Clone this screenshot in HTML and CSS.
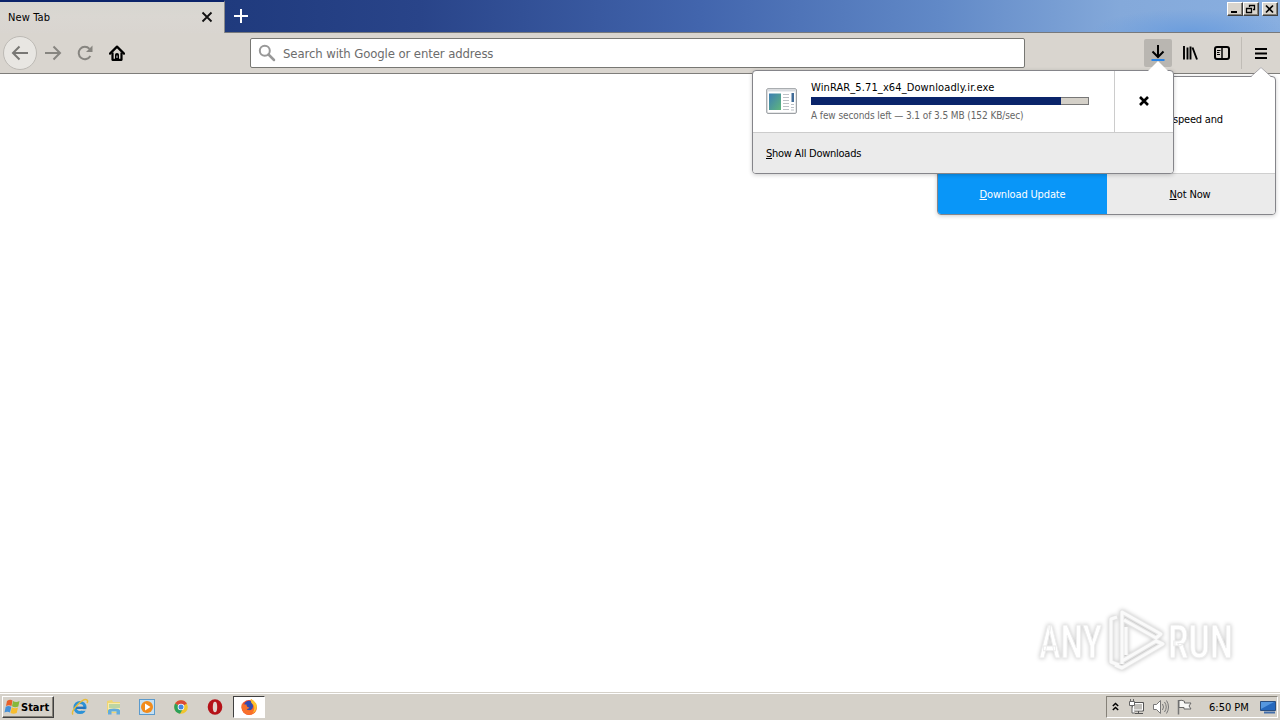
FILE: index.html
```html
<!DOCTYPE html>
<html lang="en">
<head>
<meta charset="utf-8">
<title>New Tab</title>
<link rel="stylesheet" href="styles.css">
</head>
<body>
<div class="screen">
  <header class="titlebar">
    <div class="tab"><span class="t-tab">New Tab</span>
      <svg class="tab-close" width="12" height="12" viewBox="0 0 12 12"><path d="M1.500 1.500l9 9M10.500 1.500l-9 9" stroke="#111" stroke-width="1.800"/></svg>
    </div>
    <svg class="plus" width="14" height="14" viewBox="0 0 14 14"><path d="M7 0v14M0 7h14" stroke="#fff" stroke-width="2"/></svg>
    <div class="winbtns">
      <div class="wb"><svg width="12" height="10"><path d="M2 8h6" stroke="#000" stroke-width="2"/></svg></div>
      <div class="wb"><svg width="12" height="10"><path d="M4.500 3V1.500H9.500V5.500H8M4 1.500h6M1.500 4.500h5v4h-5zM1 4.500h6" fill="none" stroke="#000" stroke-width="1.300"/></svg></div>
      <div class="wb gap"><svg width="12" height="10"><path d="M2 1.500l7 7M9 1.500l-7 7" stroke="#000" stroke-width="1.700"/></svg></div>
    </div>
  </header>
  <nav class="toolbar">
    <div class="back"><svg width="18" height="16" viewBox="0 0 18 16"><path d="M17 8H2M8.500 1.500L2 8l6.500 6.500" fill="none" stroke="#787774" stroke-width="2"/></svg></div>
    <svg class="fwd" width="18" height="16" viewBox="0 0 18 16"><path d="M1 8h15M9.500 1.500L16 8l-6.500 6.500" fill="none" stroke="#878580" stroke-width="2"/></svg>
    <svg class="reload" width="16" height="16" viewBox="0 0 16 16"><path d="M13.300 11A6.200 6.200 0 1 1 12.500 3.800" fill="none" stroke="#878580" stroke-width="2"/><path d="M15.500 0.500v6.500H9z" fill="#878580"/></svg>
    <svg class="home" width="16" height="16" viewBox="0 0 16 16"><path d="M1 8.600L8 1.600l7 7" fill="none" stroke="#000" stroke-width="2.200" stroke-linejoin="round" stroke-linecap="round"/><path d="M3.500 7.500V14.800h9V7.500" fill="none" stroke="#000" stroke-width="2.200" stroke-linejoin="round"/><path d="M6 15V9.500q0-1.500 2-1.500t2 1.500V15z"/><path d="M8 10.500v2.500" stroke="#ddd" stroke-width="1"/></svg>
    <div class="urlbar">
      <svg width="18" height="18" viewBox="0 0 18 18"><circle cx="6.800" cy="6.800" r="5" fill="none" stroke="#989898" stroke-width="2"/><path d="M10.500 10.500L16 16" stroke="#989898" stroke-width="2.500" stroke-linecap="round"/></svg>
      <span class="t-url">Search with Google or enter address</span>
    </div>
    <div class="tools">
      <div class="dl"><svg width="16" height="18" viewBox="0 0 16 18"><path d="M8 1v12M2.500 7.500L8 13l5.500-5.500" fill="none" stroke="#000" stroke-width="2"/><path d="M1.500 16h13" stroke="#2a84e6" stroke-width="2"/></svg></div>
      <svg class="lib" width="16" height="16" viewBox="0 0 16 16"><path d="M2 1v13.500M5.500 2.500v12M8.500 1.500v13M10.500 2.500l4.500 12" stroke="#000" stroke-width="1.900"/></svg>
      <svg class="side" width="16" height="14" viewBox="0 0 16 14"><rect x="1" y="1" width="14" height="12" rx="2" fill="none" stroke="#000" stroke-width="2"/><path d="M8 1v12" stroke="#000" stroke-width="1.500"/><path d="M3 4.500h3.500M3 6.500h2.500M3 8.500h3" stroke="#000"/></svg>
      <div class="sep"></div>
      <svg class="burger" width="12" height="13" viewBox="0 0 12 13"><path d="M0 2h12M0 6.500h12M0 11h12" stroke="#000" stroke-width="2"/></svg>
    </div>
  </nav>
  <main class="page"></main>
  <footer class="taskbar">
    <div class="start">
      <svg width="17" height="16" viewBox="0 0 17 16"><path d="M3 2q3-2 5.500-.5L7.500 7Q5 5.500 2 7z" fill="#e8602a"/><path d="M9 2Q12 4 15.500 2L14.300 7.500Q11 9 8 7.300z" fill="#86b83b"/><path d="M1.700 7.700Q4.500 6.200 7.300 7.700L6 13.500Q3.500 12 .5 13.500z" fill="#4590d8"/><path d="M7.800 8.200q3 1.800 6.200 .2L12.700 14Q9.500 15.500 6.500 14z" fill="#f7bd2f"/></svg>
      <span class="t-start">Start</span>
    </div>
    <div class="quick">
      <svg width="18" height="18" viewBox="0 0 18 18"><circle cx="9" cy="9.500" r="5" fill="none" stroke="#2c92d7" stroke-width="3.200"/><path d="M5 9.800h9.500" stroke="#2474bd" stroke-width="2.400"/><path d="M11 12h5" stroke="#d5d1c9" stroke-width="1.600"/><path d="M2 16.500C-1 13 12-.5 16 2c1 .8.500 2.200 0 3" fill="none" stroke="#e8bc38" stroke-width="1.500"/></svg>
      <svg width="18" height="18" viewBox="0 0 18 18"><path d="M2 3l5-1 1 2h7v11H2z" fill="#efd574"/><path d="M3 5h12v9H3z" fill="#f9ecaa"/><path d="M4 9h11M4 7h11" stroke="#80bd9a"/><path d="M3 16.500v-4q0-2 6-2t6 2v4h-3.500v-3h-5v3z" fill="#62acdc"/></svg>
      <svg width="18" height="18" viewBox="0 0 18 18"><rect x="1.500" y="1.500" width="15" height="15" fill="#c5e0f3" stroke="#5b9acc"/><circle cx="9" cy="9" r="6" fill="#f28b1b"/><path d="M7 5.500l5.500 3.500L7 12.500z" fill="#fff"/></svg>
      <svg width="18" height="18" viewBox="0 0 18 18"><circle cx="9" cy="9" r="6.800" fill="#f0c52e"/><path d="M9 9L3.100 5.600A6.800 6.800 0 0 1 14.900 5.600z" fill="#da4a38"/><path d="M9 9L3.100 5.600A6.800 6.800 0 0 0 8 15.700l3-5z" fill="#2ca05a"/><circle cx="9" cy="9" r="3.300" fill="#fff"/><circle cx="9" cy="9" r="2.500" fill="#4687e0"/></svg>
      <svg width="18" height="18" viewBox="0 0 18 18"><ellipse cx="9" cy="9" rx="7.300" ry="7.700" fill="#b51218"/><ellipse cx="9" cy="9" rx="2.200" ry="5.300" fill="#e1d4ce"/></svg>
    </div>
    <div class="task">
      <svg width="18" height="18" viewBox="0 0 18 18"><circle cx="9" cy="9.500" r="7.500" fill="#ef4a2c"/><circle cx="9" cy="7.500" r="4.800" fill="#314bb0"/><path d="M2 5Q0 14 7 16.500q7 1.500 9.500-4.500Q18 5 11 1q-1 3 1.500 5 1.500 4-1.500 6-3 1-4.500-1 2 0 3-1.500-3 0-3-3Q3 7 2 5z" fill="#f8702a"/><path d="M11 1q7 4 5.500 9-1 4-4 5 3-4 1-8Q10 4 11 1z" fill="#fcc42e"/></svg>
    </div>
    <div class="tray">
      <svg class="chev" width="7" height="9" viewBox="0 0 7 9"><path d="M.8 4l2.700-2.500L6.200 4M.8 8l2.700-2.500L6.200 8" fill="none" stroke="#000" stroke-width="1.500"/></svg>
      <svg class="net" width="17" height="16" viewBox="0 0 17 16"><path d="M4.500 3.500h11v8.500h-11z" fill="#c0beb9" stroke="#555"/><path d="M5.500 4.500h9v6.500h-9z" fill="none" stroke="#fff"/><path d="M7 14.500h8M10.500 12v2" stroke="#555"/><path d="M1.500 2.500h5v4h-5zM2.500 0v2M5.500 0v2M4 7v7h3" fill="#fff" stroke="#666"/></svg>
      <svg class="vol" width="18" height="16" viewBox="0 0 18 16"><path d="M1.500 5.500h3l4-4v13l-4-4h-3z" fill="#fff" stroke="#777"/><path d="M10.500 5q2 3 0 6M12.500 3q3.500 5 0 10M14.500 1.500q4 6.500 0 13" fill="none" stroke="#777"/></svg>
      <svg class="flag" width="17" height="16" viewBox="0 0 17 16"><path d="M2.500 1v14.500" stroke="#777" stroke-width="1.500"/><path d="M3 1.500q3-.8 5.500.8v1.700h6.500l-2 3 2 3H8V8.500H3z" fill="#f8f8f6" stroke="#666"/></svg>
      <span class="t-clock">6:50 PM</span>
      <svg class="desk" width="16" height="14" viewBox="0 0 16 14"><path d="M.5 1.500h15v9H.5z" fill="#2568bd" stroke="#294e80"/><path d="M1 2h13L1 9z" fill="#5597df"/><path d="M4 12.500h11" stroke="#426eaa" stroke-width="2"/></svg>
    </div>
  </footer>

  <section class="popup update">
    <svg class="arrow" width="20" height="10" viewBox="0 0 20 10"><path d="M0 10L10 0l10 10z" fill="#fff"/><path d="M0 9.500L10 .5l10 9" fill="none" stroke="#98969a" stroke-width=".8"/></svg>
    <div class="msg"><span class="t-speed">speed and</span></div>
    <div class="actions">
      <div class="primary"><span class="t-du"><u>D</u>ownload Update</span></div>
      <div class="secondary"><span class="t-nn"><u>N</u>ot Now</span></div>
    </div>
  </section>

  <section class="popup downloads">
    <svg class="arrow" width="20" height="10" viewBox="0 0 20 10"><path d="M0 10L10 0l10 10z" fill="#fff"/></svg>
    <div class="item">
      <svg class="exe" width="32" height="27" viewBox="0 0 32 27"><defs><linearGradient id="g" x2="1" y2="1"><stop stop-color="#3c7eb4"/><stop offset="1" stop-color="#5fb67c"/></linearGradient></defs><rect x=".8" y=".8" width="29.500" height="24.500" rx="1" fill="#fff" stroke="#858a8f"/><path d="M1.500 2.500h28" stroke="#d8dce0" stroke-width="2"/><rect x="3" y="5.500" width="12" height="16.500" fill="url(#g)"/><path d="M17 6.500h6M17 9.500h6M17 12.500h6M17 15.500h6M17 18.500h6M17 21.500h6M25 16.500h3M25 19.500h3M25 22h3" stroke="#bcc1c6"/><rect x="25.500" y="5" width="2.500" height="9" fill="#416c98"/></svg>
      <div class="info">
        <span class="t-file">WinRAR_5.71_x64_Downloadly.ir.exe</span>
        <div class="bar"><div class="fill"></div></div>
        <span class="t-stat">A few seconds left — 3.1 of 3.5 MB (152 KB/sec)</span>
      </div>
      <div class="cancel"><svg width="10" height="10" viewBox="0 0 10 10"><path d="M1 1l8 8M9 1L1 9" stroke="#000" stroke-width="2.600"/></svg></div>
    </div>
    <div class="all"><span class="t-all"><u>S</u>how All Downloads</span></div>
  </section>

  <div class="mark">
    <svg width="240" height="80" viewBox="0 0 240 80">
      <g fill="#fff" stroke="#ececec" stroke-width="1" font-family="Roboto, sans-serif" font-weight="500" font-size="46">
        <text x="9" y="58" textLength="63" lengthAdjust="spacingAndGlyphs">ANY</text>
        <text x="138" y="58" textLength="65" lengthAdjust="spacingAndGlyphs">RUN</text>
      </g>
      <g fill="none" stroke-linejoin="round"><path d="M92 64V12l39 22-5 4-32-18M87 17l-6 2v43l8 3M92 61l34-20 7 3-41 24-7-3M96 27v28" stroke="#e6e6e6" stroke-width="5"/><path d="M92 64V12l39 22-5 4-32-18M87 17l-6 2v43l8 3M92 61l34-20 7 3-41 24-7-3M96 27v28" stroke="#fafafa" stroke-width="3"/></g>
    </svg>
  </div>
</div>
</body>
</html>
```
FILE: styles.css
```css
* { box-sizing: border-box; }
body { margin: 0; font-family: "DejaVu Sans Condensed", "DejaVu Sans", sans-serif; font-stretch: condensed; font-size: 11px; color: #000; }
svg { display: block; flex: none; }
span { white-space: nowrap; }
u { text-underline-offset: 1px; text-decoration-thickness: 1px; }
.screen { position: relative; width: 1280px; height: 720px; display: flex; flex-direction: column; overflow: hidden; background: #fff; }
.titlebar { height: 33px; flex: none; display: flex; align-items: flex-start; background: radial-gradient(ellipse 100px 24px at 1190px 33px, #6b9ddd, transparent), linear-gradient(90deg, #1f3a7d 220px, #294489 420px, #4265ad 700px, #6189c7 940px, #84a9da 1120px, #89afe0); border-bottom: 1px solid #77797c; }
.tab { width: 225px; height: 33px; background: linear-gradient(#d6d6d0, #dad7d2 14px, #d9d5d0); border-top: 2px solid #0a246a; border-right: 1px solid #8b8b8b; padding: 0 11px 1px 8px; display: flex; align-items: center; justify-content: space-between; }
.plus { margin: 9px 0 0 9px; }
.winbtns { margin: 2px 2px 0 auto; display: flex; }
.wb { width: 16px; height: 14px; background: #d8d4cd; border: 1px solid; border-color: #fff #404040 #404040 #fff; box-shadow: inset -1px -1px #858178; padding: 1px 0 0 1px; }
.gap { margin-left: 3px; }
.toolbar { height: 41px; flex: none; display: flex; align-items: center; background: #d9d5cf; border-bottom: 1px solid #7e7d7a; padding-left: 3px; }
.back { width: 34px; height: 34px; border-radius: 50%; background: #e8e6e2; border: 1px solid #bdbab5; display: flex; align-items: center; justify-content: center; }
.fwd { margin-left: 7px; }
.reload { margin-left: 15px; }
.home { margin-left: 16px; }
.urlbar { margin-left: 125px; width: 775px; height: 30px; background: #fff; border: 1px solid #777773; border-radius: 2px; display: flex; align-items: center; padding-left: 7px; gap: 7px; }
.tools { margin-left: auto; display: flex; align-items: center; }
.dl { width: 28px; height: 28px; background: #b9b6b1; border-radius: 2px; display: flex; align-items: center; justify-content: center; }
.lib { margin-left: 10px; }
.side { margin-left: 16px; }
.sep { width: 1px; height: 32px; margin-left: 11px; background: #c0bcb6; }
.burger { margin: 0 13px; }
.page { flex: 1; background: #fff; }
.taskbar { height: 28px; flex: none; display: flex; align-items: center; background: #d5d1c9; border-top: 1px solid #d5d1c9; box-shadow: inset 0 1px #fff; padding: 0 2px; }
.start { width: 52px; height: 22px; border: 1px solid; border-color: #fff #404040 #404040 #fff; box-shadow: inset -1px -1px #858178; display: flex; align-items: center; padding-left: 1px; }
.quick { display: flex; gap: 15.700px; margin-left: 17px; }
.task { width: 32px; height: 22px; margin-left: 9px; background: #fff; border: 1px solid; border-color: #404040 #fff #fff #404040; display: flex; align-items: center; justify-content: center; }
.tray { margin-left: auto; width: 172px; height: 22px; border: 1px solid; border-color: #858178 #fff #fff #858178; display: flex; align-items: center; padding-left: 5px; }
.net { margin-left: 9px; }
.vol { margin-left: 7px; }
.flag { margin-left: 6px; }
.t-clock { margin-left: 16px; width: 41px; padding-top: 2px; }
.desk { margin-left: auto; margin-right: 1px; }
.popup { position: absolute; border: 1px solid #85858a; border-radius: 4px; box-shadow: 0 1px 4px rgba(0,0,0,.2); background: #fff; }
.arrow { position: absolute; top: -10px; }
.update { left: 937px; top: 76px; width: 339px; height: 139px; display: flex; flex-direction: column; }
.update .arrow { left: 313px; }
.msg { height: 96px; padding: 36px 0 0 235px; }
.actions { flex: 1; display: flex; border-radius: 0 0 3px 3px; overflow: hidden; }
.primary, .secondary { display: flex; align-items: center; justify-content: center; }
.primary { width: 169px; background: #0996f8; color: #fff; padding-top: 1px; }
.secondary { flex: 1; background: #ebebeb; border-top: 1px solid #cfcfcf; padding-right: 2px; }
.downloads { left: 752px; top: 70px; width: 422px; height: 104px; }
.downloads .arrow { left: 395px; }
.item { height: 62px; display: flex; align-items: center; border-bottom: 1px solid #ccc; padding-left: 13px; }
.info { width: 278px; margin: -1px 0 0 13px; display: flex; flex-direction: column; }
.info span { height: 15px; line-height: 15px; }
.bar { height: 8px; margin: 2px 0; background: #d4d0c8; border: 1px solid #777; }
.fill { width: 250px; height: 8px; margin: -1px; background: #0a246a; }
.cancel { margin-left: auto; width: 59px; height: 61px; border-left: 1px solid #ccc; display: flex; align-items: center; justify-content: center; padding-bottom: 1px; }
.all { height: 40px; background: #ebebeb; border-radius: 0 0 3px 3px; display: flex; align-items: center; padding-left: 13px; }
.mark { position: absolute; left: 1030px; top: 600px; filter: drop-shadow(0 0 2px #c4c4c4); }
.t-tab { letter-spacing: .12px; }
.t-url { font-size: 13px; letter-spacing: -.1px; color: #6c6c6c; }
.t-file { letter-spacing: .11px; }
.info .t-stat { font-size: 10px; line-height: 17px; letter-spacing: -.09px; color: #666; }
.t-all { letter-spacing: -.25px; }
.t-du { letter-spacing: -.15px; }
.t-nn { letter-spacing: -.15px; }
.t-speed { letter-spacing: -.2px; }
.t-start { font-weight: bold; font-size: 11px; padding-top: 2px; }
```
